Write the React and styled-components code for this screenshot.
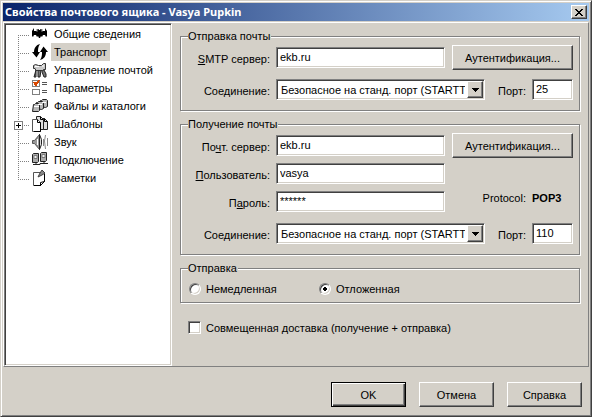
import React from "react";
import styled, { createGlobalStyle, css } from "styled-components";

const FACE = "#d4d0c8";
const GRAY = "#808080";
const DARK = "#404040";

const GlobalStyle = createGlobalStyle`
  * { box-sizing: border-box; }
  body {
    margin: 0;
    background: ${FACE};
    color: #000;
    font: 11px/14px "Liberation Sans", Arial, sans-serif;
  }
  button, input, select { font: inherit; color: inherit; border-radius: 0; margin: 0; }
`;

const sunken = css`
  border: 1px solid;
  border-color: ${GRAY} #fff #fff ${GRAY};
  box-shadow: inset 1px 1px 0 ${DARK}, inset -1px -1px 0 ${FACE};
`;

const raised = css`
  border: 1px solid;
  border-color: #fff ${DARK} ${DARK} #fff;
  box-shadow: inset -1px -1px 0 ${GRAY};
  background: ${FACE};
`;

const Window = styled.form`
  display: flex;
  flex-direction: column;
  min-height: 100vh;
  padding: 2px;
  background: ${FACE};
  border: 1px solid;
  border-color: ${FACE} ${DARK} ${DARK} ${FACE};
  box-shadow: inset 1px 1px 0 #fff, inset -1px -1px 0 ${GRAY};
`;

const TitleBar = styled.header`
  display: flex;
  align-items: center;
  justify-content: space-between;
  height: 18px;
  margin-bottom: 1px;
  padding: 0 2px;
  background: linear-gradient(90deg, #0a246a, #a6caf0);
`;

const Title = styled.h1`
  margin: 0;
  color: #fff;
  font-family: "Noto Sans", "Liberation Sans", sans-serif;
  font-size: 11px;
  font-weight: bold;
  white-space: nowrap;
`;

const CloseButton = styled.button`
  ${raised}
  display: flex;
  align-items: center;
  justify-content: center;
  width: 16px;
  height: 14px;
  padding: 0;
`;

const Main = styled.main`
  display: flex;
  flex: 1;
  border: 1px solid;
  border-color: #fff ${GRAY} ${GRAY} #fff;
`;

const Tree = styled.ul`
  ${sunken}
  flex: none;
  width: 168px;
  margin: 0;
  padding: 1px;
  list-style: none;
  background: #fff;
`;

const TreeRow = styled.li`
  display: flex;
  height: 18px;
`;

const TreeButton = styled.button`
  display: flex;
  align-items: center;
  gap: 3px;
  padding: 0;
  border: 0;
  background: none;
  white-space: nowrap;
`;

const TreeLabel = styled.span`
  padding: 2px 3px;
  background: ${(p) => (p.$selected ? FACE : "transparent")};
`;

const Panel = styled.section`
  flex: 1;
  min-width: 0;
  padding: 7px 8px 32px;
`;

const Group = styled.fieldset`
  min-width: 0;
  margin: 0 0 7px;
  padding: ${(p) => (p.$compact ? "7px 6px 7px 7px" : "4px 6px 10px 7px")};
  border: 1px solid ${GRAY};
  box-shadow: 1px 1px 0 #fff, inset 1px 1px 0 #fff;
`;

const Legend = styled.legend`
  height: 13px;
  padding: 0 1px 0 0;
  line-height: 13px;
  background: ${FACE};
`;

const Row = styled.div`
  display: flex;
  align-items: center;
  height: 21px;
  margin-top: ${(p) => p.$gap || 0}px;
`;

const FieldLabel = styled.label`
  flex: none;
  width: ${(p) => (p.$narrow ? 41 : 82)}px;
  margin-right: 6px;
  padding-top: 2px;
  text-align: right;
  white-space: nowrap;
`;

const TextInput = styled.input`
  ${sunken}
  flex: ${(p) => (p.$short ? "none" : 1)};
  width: ${(p) => (p.$short ? "41px" : "auto")};
  min-width: 0;
  height: 21px;
  padding: 1px 3px 2px;
  outline: none;
  background: #fff;
`;

const Side = styled.div`
  display: flex;
  flex: none;
  align-self: ${(p) => (p.$top ? "flex-start" : "center")};
  width: 121px;
  margin-left: 7px;
`;

const ProtocolName = styled.span`
  width: 74px;
  margin-right: 6px;
  text-align: right;
`;

const Combo = styled.div`
  ${sunken}
  position: relative;
  display: flex;
  flex: 1;
  min-width: 0;
  height: 21px;
  padding: 1px;
  background: #fff;
`;

const Select = styled.select`
  flex: 1;
  min-width: 0;
  padding: 0 18px 0 3px;
  border: 0;
  outline: none;
  appearance: none;
  background: transparent;
`;

const ComboArrow = styled.span`
  ${raised}
  position: absolute;
  top: 1px;
  right: 1px;
  bottom: 1px;
  display: flex;
  align-items: center;
  justify-content: center;
  width: 16px;
  pointer-events: none;
`;

const PushButton = styled.button`
  ${raised}
  width: ${(p) => (p.$wide ? 121 : 75)}px;
  height: 25px;
  padding: 0;
  ${(p) =>
    p.$default &&
    css`
      border-color: #000;
      box-shadow: inset 1px 1px 0 #fff, inset -1px -1px 0 ${DARK}, inset -2px -2px 0 ${GRAY};
    `}
`;

const Options = styled.div`
  display: grid;
  grid-template-columns: 130px 1fr;
`;

const Choice = styled.label`
  display: flex;
  align-items: center;
  gap: 5px;
  height: 13px;
  white-space: nowrap;
`;

const Radio = styled.input`
  appearance: none;
  width: 12px;
  height: 12px;
  margin-left: 1px;
  border: 1px solid;
  border-color: ${GRAY} #fff #fff ${GRAY};
  border-radius: 50%;
  background: ${(p) => (p.checked ? "radial-gradient(circle, #000 0 2px, #fff 2px)" : "#fff")};
  box-shadow: inset 1px 1px 0 ${DARK}, inset -1px -1px 0 ${FACE};
`;

const CheckBox = styled.input`
  ${sunken}
  appearance: none;
  width: 13px;
  height: 13px;
  background: #fff;
`;

const Extra = styled.div`
  margin-top: 18px;
  padding-left: 8px;
`;

const Footer = styled.footer`
  display: flex;
  justify-content: flex-end;
  gap: 13px;
  padding: 15px 7px 7px;
`;

const Glyph = styled.svg`
  flex: none;
  display: block;
`;

const BatIcon = () => (
  <Glyph width="16" height="16" viewBox="0 0 16 16">
    <path
      d="M2 2L0 5v5l1 1 1-2h2l1 2 1-1 1 2h1l1-2 1 1 1-2h2l1 2 1-1V5l-2-3v3h-3L9.500 3H8.500L8 4H7L6.500 3H5.500L5 5H2z"
      fill="#000"
    />
    <path d="M5 3v3M10 3v3" stroke="#777" fill="none" />
  </Glyph>
);

const TransportIcon = () => (
  <Glyph width="16" height="16" viewBox="0 0 16 16">
    <path d="M8 0C4 1 2 4 2 8H0l4.500 5.500L8 8H6C6 5 6 3 8 0z" fill="#000" />
    <path d="M8 16c4-1 6-4 6-8h2l-4.500-5.500L8 8h2c0 3 0 5-2 8z" fill="#000" />
  </Glyph>
);

const MailboxIcon = () => (
  <Glyph width="16" height="16" viewBox="0 0 16 16">
    <path d="M4 8v7H2l2-7zM6 8h3l-1 7H6zM10 8h2l2 4v3h-2l-2-5z" fill="#777" stroke="#222" />
    <path d="M1.500 3.500l2-1 3 1h3l2-2h2v6h-2l-1 1H4l-1-2H1.500z" fill="#c8c8c8" stroke="#333" />
    <path d="M3 4.500h4M10 4h2" fill="none" stroke="#fff" />
  </Glyph>
);

const OptionsIcon = () => (
  <Glyph width="16" height="16" viewBox="0 0 16 16" shapeRendering="crispEdges">
    <path d="M.5 .5h7v6h-7zM.5 9.500h7v5h-7z" fill="#fff" stroke="#808080" />
    <path d="M10 2h5v1h-5zM10 4h5v1h-5zM10 10h5v1h-5zM10 12h5v1h-5z" fill="#555" />
    <path d="M2 2l2 3 3-5" fill="none" stroke="#d84800" strokeWidth="2" />
  </Glyph>
);

const FoldersIcon = () => (
  <Glyph width="16" height="16" viewBox="0 0 16 16">
    <g fill="#b8b8b8" stroke="#222">
      <path d="M8.500 8.500v-6h1l1-1h4l1 1v6l-2 1z" />
      <path d="M4.500 10.500v-6h1l1-1h4l1 1v6l-2 1z" />
      <path d="M.5 13.500l1-7h1l1-1h3l1 1v6l-1 1z" />
    </g>
    <path d="M2 8.500h5M6 6.500h4M10 4.500h4" stroke="#fff" fill="none" />
  </Glyph>
);

const TemplatesIcon = () => (
  <Glyph width="16" height="16" viewBox="0 0 16 16">
    <g fill="#ddd" stroke="#222">
      <path d="M8.500 2.500h4l3 3v8h-7z" />
      <path d="M4.500.5h4l3 3v10h-7z" />
      <path d="M.5 3.500h5l3 3v9h-8z" fill="#fff" stroke="#555" />
    </g>
    <path d="M5.500 3.500v3h3v9H2M8.500.5v3h3M12.500 2.500v3h3" fill="none" stroke="#000" />
  </Glyph>
);

const SoundIcon = () => (
  <Glyph width="16" height="16" viewBox="0 0 16 16">
    <path d="M.5 6.500h2l5-6v15l-5-6h-2z" fill="#999" stroke="#555" />
    <path d="M7.500.5l2 5v5l-2 5z" fill="#ddd" stroke="#222" />
    <path d="M5.500 5v6" fill="none" stroke="#fff" />
    <path d="M11.500 5v7M13.500 1l-1 6 1 8M15.500 4v8" fill="none" stroke="#888" />
  </Glyph>
);

const ConnectionIcon = () => (
  <Glyph width="16" height="16" viewBox="0 0 16 16">
    <path d="M.5 2.500l1-1h5v8l-1 1h-5zM8.500 1.500l1-1h5v8l-1 1h-5z" fill="#aaa" stroke="#222" />
    <path d="M2 3.500h3v3H2zM10 2.500h3v3h-3z" fill="#eee" stroke="#777" />
    <path d="M1 12.500h7v-1h8M4 10v3M12 9v3" fill="none" stroke="#222" />
  </Glyph>
);

const NotesIcon = () => (
  <Glyph width="16" height="16" viewBox="0 0 16 16">
    <path d="M1.500 2.500h11v9l-4 4h-7z" fill="#fff" stroke="#555" />
    <path d="M12.500 3v8.500l-4 4v-3l4-1M2 15.500h7" fill="none" stroke="#000" />
    <path d="M6 7l2-4 2-3 3 3-3 2z" fill="#888" stroke="#444" />
  </Glyph>
);

const Branch = ({ first, last, expandable }) => (
  <Glyph width="26" height="18" viewBox="0 0 26 18" shapeRendering="crispEdges" aria-hidden="true">
    <path
      d={`M12.5 ${first ? 10 : 0}V${last ? 11 : 18}M12 10.5H24`}
      fill="none"
      stroke="#808080"
      strokeDasharray="1 1"
    />
    {expandable && (
      <>
        <path d="M8.5 6.5h8v8h-8z" fill="#fff" stroke="#808080" />
        <path d="M10 10.5h5M12.5 8v5" stroke="#000" />
      </>
    )}
  </Glyph>
);

const SECTIONS = [
  { name: "Общие сведения", Icon: BatIcon },
  { name: "Транспорт", Icon: TransportIcon, selected: true },
  { name: "Управление почтой", Icon: MailboxIcon },
  { name: "Параметры", Icon: OptionsIcon },
  { name: "Файлы и каталоги", Icon: FoldersIcon },
  { name: "Шаблоны", Icon: TemplatesIcon, expandable: true },
  { name: "Звук", Icon: SoundIcon },
  { name: "Подключение", Icon: ConnectionIcon },
  { name: "Заметки", Icon: NotesIcon },
];

const ConnectionRow = ({ id, port }) => (
  <Row $gap={11}>
    <FieldLabel htmlFor={`${id}-security`}>Соединение:</FieldLabel>
    <Combo>
      <Select id={`${id}-security`}>
        <option>Безопасное на станд. порт (STARTTLS)</option>
      </Select>
      <ComboArrow>
        <Glyph width="7" height="4" viewBox="0 0 7 4" shapeRendering="crispEdges">
          <path d="M0 0h7v1H0zM1 1h5v1H1zM2 2h3v1H2zM3 3h1v1H3z" />
        </Glyph>
      </ComboArrow>
    </Combo>
    <FieldLabel $narrow htmlFor={`${id}-port`}>
      Порт:
    </FieldLabel>
    <TextInput $short id={`${id}-port`} defaultValue={port} />
  </Row>
);

export default function App() {
  const [mode, setMode] = React.useState("delayed");
  return (
    <>
      <GlobalStyle />
      <Window onSubmit={(e) => e.preventDefault()}>
        <TitleBar>
          <Title>Свойства почтового ящика - Vasya Pupkin</Title>
          <CloseButton type="button" aria-label="Закрыть">
            <Glyph width="8" height="7" viewBox="0 0 8 7" shapeRendering="crispEdges">
              <path d="M0 0h2v1H0zM6 0h2v1H6zM1 1h2v1H1zM5 1h2v1H5zM2 2h4v1H2zM3 3h2v1H3zM2 4h4v1H2zM1 5h2v1H1zM5 5h2v1H5zM0 6h2v1H0zM6 6h2v1H6z" />
            </Glyph>
          </CloseButton>
        </TitleBar>
        <Main>
          <Tree>
            {SECTIONS.map(({ name, Icon, selected, expandable }, i) => (
              <TreeRow key={name}>
                <Branch first={i === 0} last={i === SECTIONS.length - 1} expandable={expandable} />
                <TreeButton type="button">
                  <Icon />
                  <TreeLabel $selected={selected}>{name}</TreeLabel>
                </TreeButton>
              </TreeRow>
            ))}
          </Tree>
          <Panel>
            <Group>
              <Legend>Отправка почты</Legend>
              <Row>
                <FieldLabel htmlFor="smtp">
                  <u>S</u>MTP сервер:
                </FieldLabel>
                <TextInput id="smtp" defaultValue="ekb.ru" />
                <Side>
                  <PushButton type="button" $wide>
                    Аутентификация...
                  </PushButton>
                </Side>
              </Row>
              <ConnectionRow id="send" port="25" />
            </Group>
            <Group>
              <Legend>Получение почты</Legend>
              <Row>
                <FieldLabel htmlFor="incoming">
                  По<u>ч</u>т. сервер:
                </FieldLabel>
                <TextInput id="incoming" defaultValue="ekb.ru" />
                <Side>
                  <PushButton type="button" $wide>
                    Аутентификация...
                  </PushButton>
                </Side>
              </Row>
              <Row $gap={7}>
                <FieldLabel htmlFor="user">
                  <u>П</u>ользователь:
                </FieldLabel>
                <TextInput id="user" defaultValue="vasya" />
                <Side />
              </Row>
              <Row $gap={7}>
                <FieldLabel htmlFor="password">
                  П<u>а</u>роль:
                </FieldLabel>
                <TextInput id="password" defaultValue="******" />
                <Side $top>
                  <ProtocolName>Protocol:</ProtocolName>
                  <strong>POP3</strong>
                </Side>
              </Row>
              <ConnectionRow id="receive" port="110" />
            </Group>
            <Group $compact>
              <Legend>Отправка</Legend>
              <Options>
                <Choice>
                  <Radio
                    type="radio"
                    name="mode"
                    checked={mode === "immediate"}
                    onChange={() => setMode("immediate")}
                  />
                  Немедленная
                </Choice>
                <Choice>
                  <Radio
                    type="radio"
                    name="mode"
                    checked={mode === "delayed"}
                    onChange={() => setMode("delayed")}
                  />
                  Отложенная
                </Choice>
              </Options>
            </Group>
            <Extra>
              <Choice>
                <CheckBox type="checkbox" />
                Совмещенная доставка (получение + отправка)
              </Choice>
            </Extra>
          </Panel>
        </Main>
        <Footer>
          <PushButton $default>OK</PushButton>
          <PushButton type="button">Отмена</PushButton>
          <PushButton type="button">Справка</PushButton>
        </Footer>
      </Window>
    </>
  );
}
